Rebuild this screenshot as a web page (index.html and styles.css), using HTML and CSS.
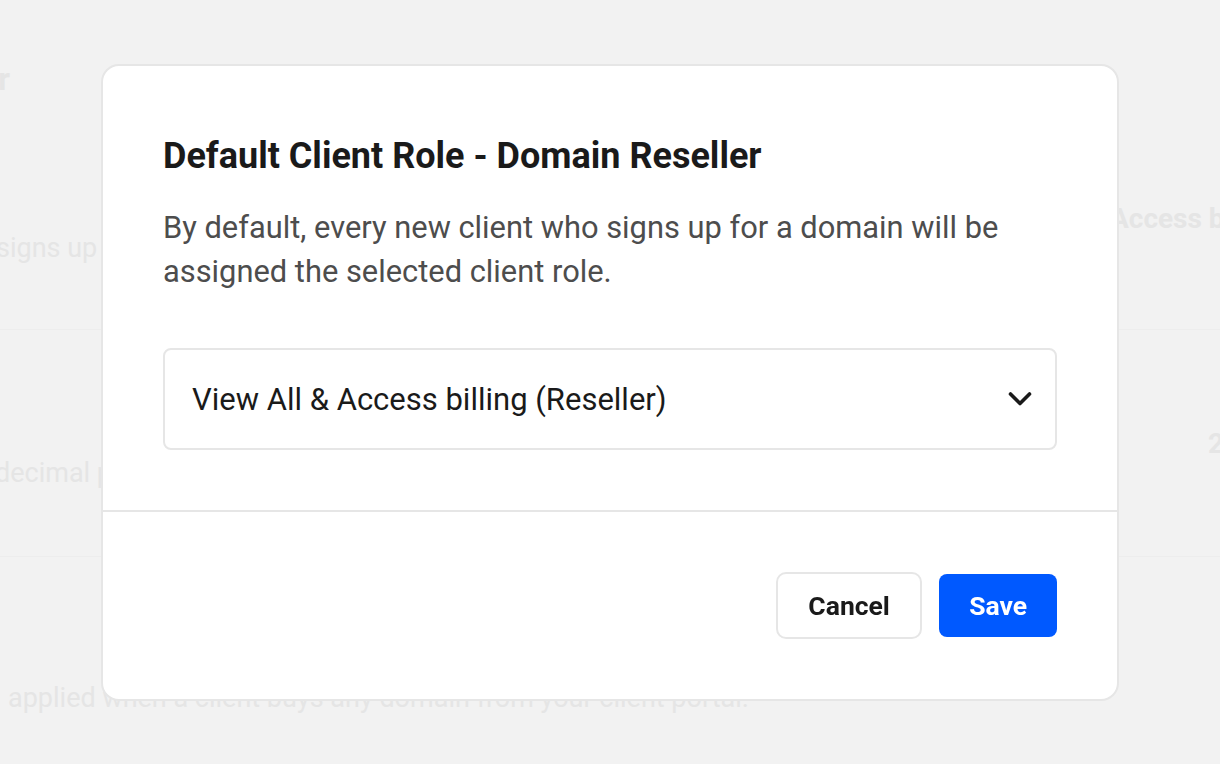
FILE: index.html
```html
<!DOCTYPE html>
<html lang="en">
<head>
<meta charset="utf-8">
<title>Default Client Role - Domain Reseller</title>
<link rel="stylesheet" href="styles.css">
</head>
<body>
  <div class="page">
    <div class="page-title-wrap"><h1 class="page-title">Domain Reseller</h1></div>
    <div class="bg-row bg-row-1">
      <p class="bg-desc bg-desc-1">signs up for a domain will be assigned the selected client role.</p>
      <div class="bg-value bg-value-1">Access billing (Reseller)</div>
    </div>
    <div class="bg-row bg-row-2">
      <p class="bg-desc bg-desc-2">decimal places shown for domain prices.</p>
      <div class="bg-value bg-value-2">2</div>
    </div>
    <div class="bg-row bg-row-3">
      <p class="bg-desc bg-desc-3">applied when a client buys any domain from your client portal.</p>
    </div>
  </div>

  <div class="modal" role="dialog" aria-labelledby="modal-title">
    <div class="modal-body">
      <h2 class="modal-title" id="modal-title">Default Client Role - Domain Reseller</h2>
      <p class="modal-text">By default, every new client who signs up for a domain will be assigned the selected client role.</p>
      <div class="select">
        <span class="select-value">View All &amp; Access billing (Reseller)</span>
        <svg class="chevron" width="24" height="16" viewBox="0 0 24 16" aria-hidden="true">
          <polyline points="2.5,3 12,12.5 21.5,3" fill="none" stroke="#1a1a1a" stroke-width="3.6" stroke-linecap="round" stroke-linejoin="round"/>
        </svg>
      </div>
    </div>
    <div class="modal-footer">
      <button class="btn btn-cancel" type="button">Cancel</button>
      <button class="btn btn-save" type="button">Save</button>
    </div>
  </div>
</body>
</html>
```
FILE: styles.css
```css
html, body {
  margin: 0;
  padding: 0;
  width: 1220px;
  height: 764px;
  overflow: hidden;
  background: #f2f2f2;
  font-family: Roboto, "Liberation Sans", Arial, sans-serif;
}

/* faded page behind the dialog */
.page {
  display: flex;
  flex-direction: column;
  color: #e5e5e5;
}

.page-title-wrap {
  display: flex;
  justify-content: flex-end;
  width: 10px;
  margin-top: 59px;
}

.page-title {
  margin: 0;
  flex: none;
  white-space: nowrap;
  font-size: 32px;
  line-height: 40px;
  font-weight: 700;
}

.bg-row {
  display: flex;
  box-sizing: border-box;
  border-bottom: 1px solid #ededed;
}

.bg-row-1 { height: 231px; }
.bg-row-2 { height: 227px; }
.bg-row-3 { height: 210px; border-bottom: none; }

.bg-desc {
  margin: 0;
  flex: none;
  width: 1100px;
  white-space: nowrap;
  font-size: 27px;
  line-height: 36px;
}

.bg-desc-1 { margin-left: -4px; padding-top: 131px; width: 1114px; }
.bg-desc-2 { margin-left: -5px; padding-top: 125px; width: 1115px; }
.bg-desc-3 { margin-left: 8px; padding-top: 123px; }

.bg-value {
  flex: none;
  white-space: nowrap;
  font-size: 28px;
  line-height: 36px;
  font-weight: 700;
}

.bg-value-1 { padding-top: 102px; }
.bg-value-2 { padding-top: 96px; padding-left: 98px; }

/* dialog */
.modal {
  position: fixed;
  left: 101px;
  top: 64px;
  width: 1018px;
  height: 637px;
  box-sizing: border-box;
  display: flex;
  flex-direction: column;
  background: #ffffff;
  border: 2px solid #e6e6e6;
  border-radius: 18px;
}

.modal-body {
  display: flex;
  flex-direction: column;
  padding: 68px 60px 60px 60px;
}

.modal-title {
  margin: 0;
  font-size: 36px;
  line-height: 44px;
  font-weight: 700;
  color: #1a1a1a;
}

.modal-text {
  margin: 28px 0 0 0;
  font-size: 30.85px;
  line-height: 44px;
  color: #4d4d4d;
}

.select {
  margin-top: 54px;
  height: 102px;
  box-sizing: border-box;
  display: flex;
  align-items: center;
  justify-content: space-between;
  padding: 0 23px 0 27px;
  border: 2px solid #e6e6e6;
  border-radius: 8px;
}

.select-value {
  font-size: 31px;
  color: #1a1a1a;
}

.chevron {
  display: block;
  flex: none;
}

.modal-footer {
  flex: 1;
  display: flex;
  align-items: center;
  justify-content: flex-end;
  gap: 17px;
  padding-right: 60px;
  border-top: 2px solid #e6e6e6;
}

.btn {
  font-family: Roboto, "Liberation Sans", Arial, sans-serif;
  font-size: 26.5px;
  font-weight: 700;
  box-sizing: border-box;
  cursor: pointer;
}

.btn-cancel {
  height: 67px;
  min-width: 146px;
  padding: 0 30px;
  background: #ffffff;
  color: #1a1a1a;
  border: 2px solid #e6e6e6;
  border-radius: 10px;
}

.btn-save {
  height: 63px;
  min-width: 117px;
  padding: 0 30px;
  background: #0059ff;
  color: #ffffff;
  border: none;
  border-radius: 8px;
}
```
